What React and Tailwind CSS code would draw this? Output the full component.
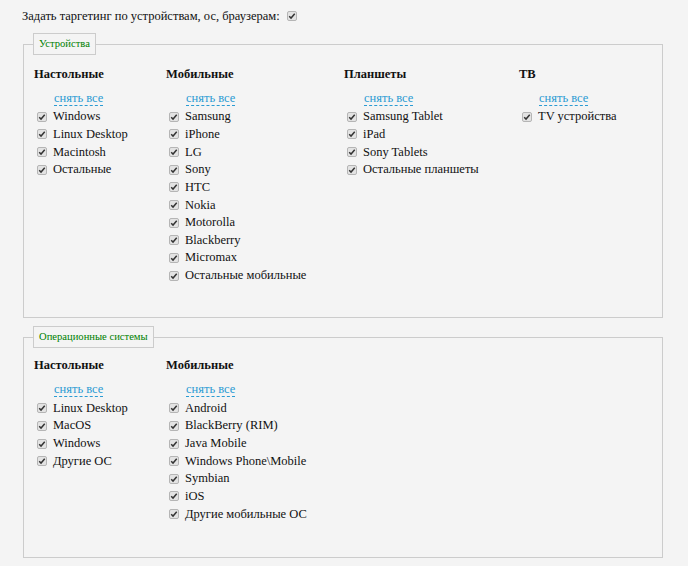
import React from "react";

const devices = [
  { title: "Настольные", w: "w-[132px]", items: ["Windows", "Linux Desktop", "Macintosh", "Остальные"] },
  {
    title: "Мобильные",
    w: "w-[178px]",
    items: ["Samsung", "iPhone", "LG", "Sony", "HTC", "Nokia", "Motorolla", "Blackberry", "Micromax", "Остальные мобильные"],
  },
  { title: "Планшеты", w: "w-[175px]", items: ["Samsung Tablet", "iPad", "Sony Tablets", "Остальные планшеты"] },
  { title: "ТВ", w: "w-[120px]", items: ["TV устройства"] },
];

const systems = [
  { title: "Настольные", w: "w-[132px]", items: ["Linux Desktop", "MacOS", "Windows", "Другие ОС"] },
  {
    title: "Мобильные",
    w: "w-[178px]",
    items: ["Android", "BlackBerry (RIM)", "Java Mobile", "Windows Phone\\Mobile", "Symbian", "iOS", "Другие мобильные ОС"],
  },
];

// small grey checked box like the old browser style
const Check = () => (
  <span className="inline-flex w-[10px] h-[10px] items-center justify-center rounded-[2px] border border-[#b5b5b5] bg-[#e3e3e3] shrink-0">
    <svg viewBox="0 0 10 10" className="w-[8px] h-[8px]">
      <path d="M1.5 5.2 L3.8 7.6 L8.4 2.2" fill="none" stroke="#333" strokeWidth="1.8" />
    </svg>
  </span>
);

const Column = ({ title, w, items }) => (
  <div className={`${w} shrink-0`}>
    <div className="font-bold text-[12.5px] leading-[16px] h-[16px]">{title}</div>
    <div className="mt-[3px] pl-[20px] h-[17px]">
      <span className="text-[#2a9bd3] text-[12.5px] leading-[15px] border-b border-dashed border-[#2a9bd3] cursor-pointer">
        снять все
      </span>
    </div>
    <div className="mt-[6px]">
      {items.map((it) => (
        <div key={it} className="flex items-center h-[17.65px] pl-[3px]">
          <Check />
          <span className="ml-[6px] text-[12.5px] leading-[17px] whitespace-nowrap">{it}</span>
        </div>
      ))}
    </div>
  </div>
);

const Group = ({ legend, cols, className }) => (
  <fieldset className={`ml-[23px] w-[640px] border border-[#cccccc] pl-[9px] pr-[9px] min-w-0 ${className}`}>
    <legend className="border border-[#cccccc] px-[5px] h-[22px] leading-[20px] text-[10.6px] text-[#008000]">{legend}</legend>
    <div className="flex pl-[1px]">
      {cols.map((c) => (
        <Column key={c.title} {...c} />
      ))}
    </div>
  </fieldset>
);

export default function App() {
  return (
    <div className="min-h-[566px] w-[688px] bg-[#f4f4f4] text-[#111] pt-[8px] font-['Liberation_Serif','Times_New_Roman',serif]">
      <div className="flex items-center pl-[22px] h-[17px] text-[12.5px]">
        <span>Задать таргетинг по устройствам, ос, браузерам:</span>
        <span className="ml-[7px]">
          <Check />
        </span>
      </div>
      <Group legend="Устройства" cols={devices} className="mt-[8px] pt-[11px] pb-[33px]" />
      <Group legend="Операционные системы" cols={systems} className="mt-[8px] pt-[9px] pb-[34px]" />
    </div>
  );
}
